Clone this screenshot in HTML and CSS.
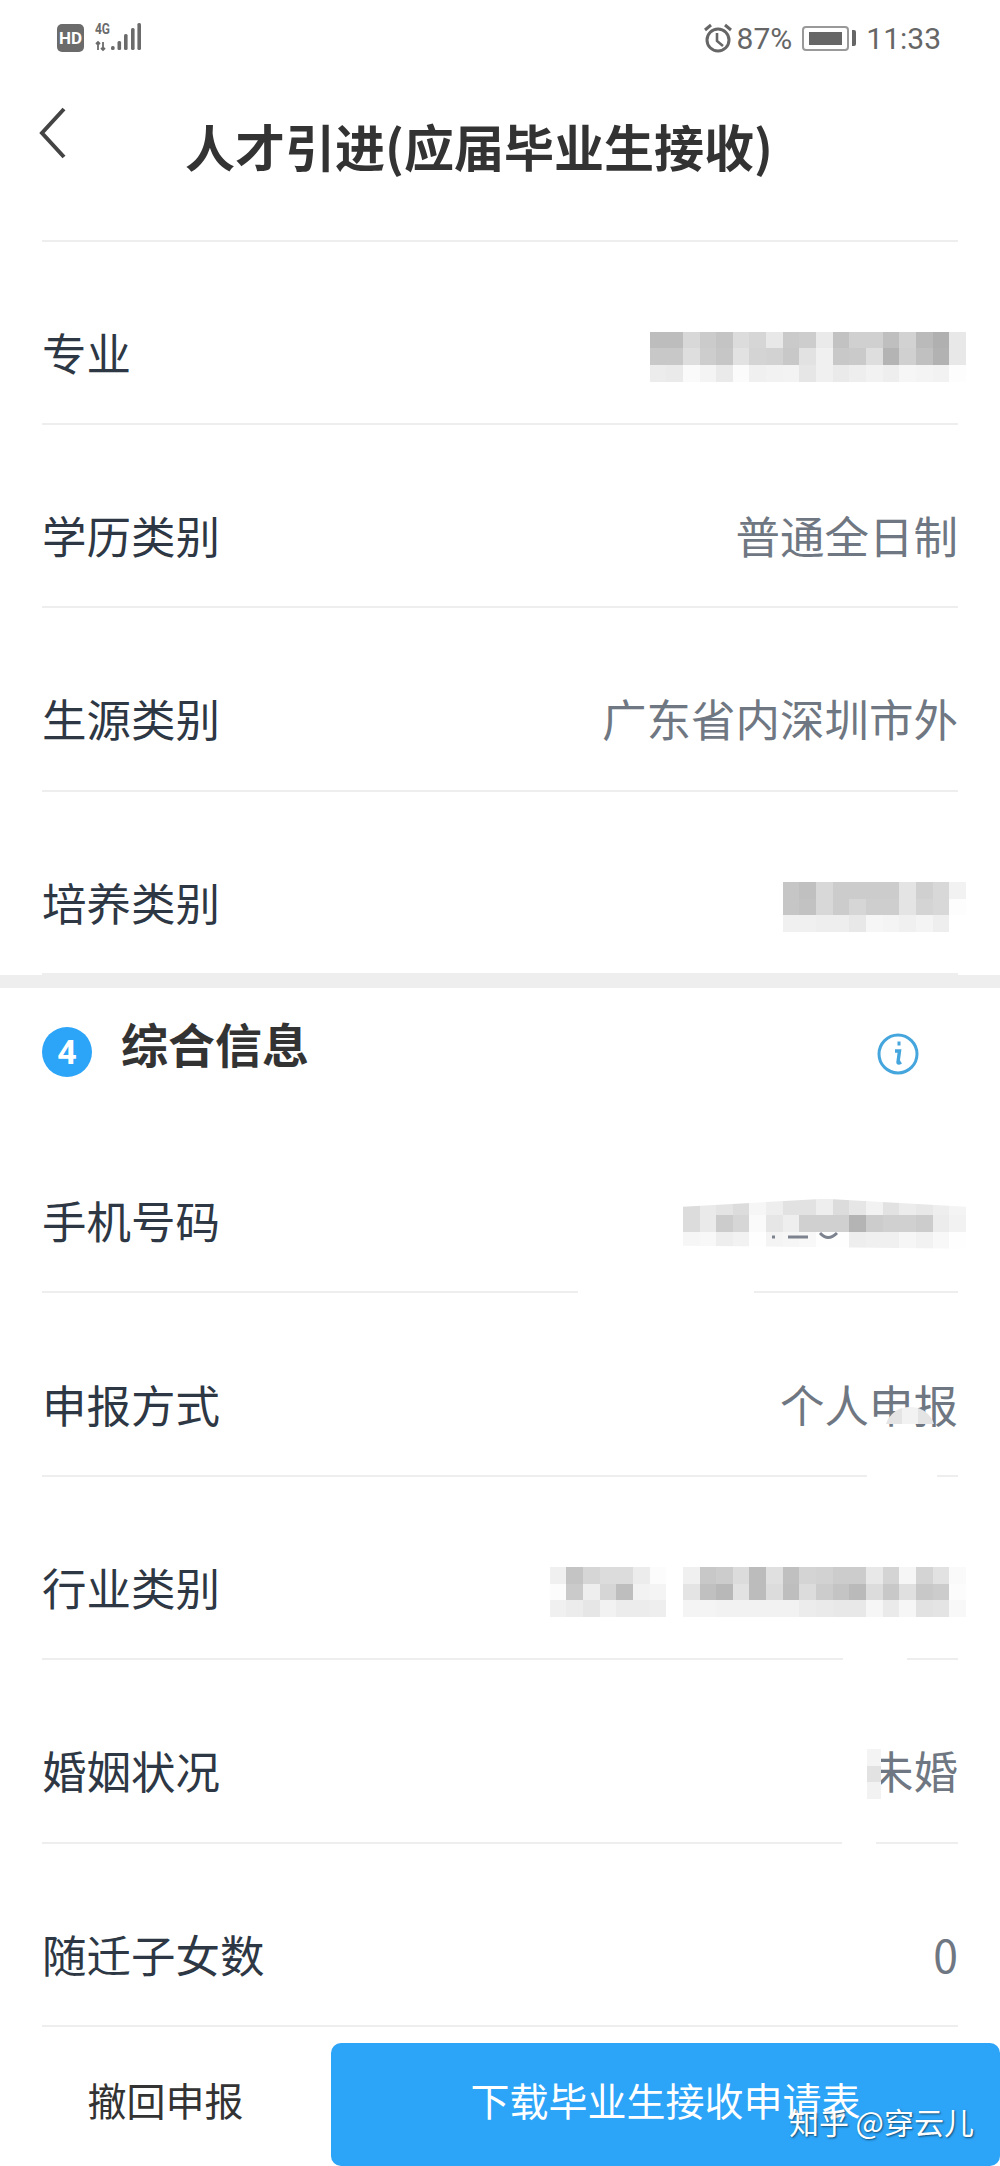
FILE: index.html
```html
<!DOCTYPE html>
<html lang="zh-CN">
<head>
    <meta charset="UTF-8">
    <meta name="viewport" content="width=device-width, initial-scale=1.0">
    <title>人才引进(应届毕业生接收)</title>
    <link rel="stylesheet" href="styles.css">
</head>
<body>
    <div class="page">
        <div class="status-bar">
            <div class="status-left">
                <span class="hd-badge">HD</span>
                <svg class="signal" width="48" height="30" viewBox="0 0 48 30">
                    <text x="0" y="11" class="signal-text" textLength="15" lengthAdjust="spacingAndGlyphs">4G</text>
                    <path d="M3 27v-8M1 21l2-2 2 2M8 19v8M6 25l2 2 2-2" fill="none" stroke="#6b6b6b" stroke-width="1.8"/>
                    <g fill="#6b6b6b">
                        <rect x="16" y="23" width="3.6" height="4" rx="1.5"/>
                        <rect x="22.5" y="18" width="3.6" height="9" rx="1.5"/>
                        <rect x="29" y="11" width="3.6" height="16" rx="1.5"/>
                        <rect x="36" y="5" width="3.6" height="22" rx="1.5"/>
                        <rect x="42.4" y="0" width="3.6" height="27" rx="1.5"/>
                    </g>
                </svg>
            </div>
            <div class="status-right">
                <svg class="alarm" width="30" height="30" viewBox="0 0 30 30" fill="none" stroke="#666">
                    <circle cx="15" cy="17" r="11" stroke-width="3"/>
                    <path d="M14 10v8l6 5" stroke-width="2.6"/>
                    <path d="M2 7l6-5M28 7l-6-5" stroke-width="3"/>
                </svg>
                <span class="status-pct">87%</span>
                <div class="battery"><div class="battery-fill"></div></div>
                <div class="battery-tip"></div>
                <span class="status-time">11:33</span>
            </div>
        </div>

        <header class="top-bar">
            <svg class="back" width="28" height="52" viewBox="0 0 28 52" fill="none" stroke="#444" stroke-width="4">
                <path d="M25 2L3 26l22 24"/>
            </svg>
            <h1>人才引进(应届毕业生接收)</h1>
        </header>

        <section class="list">
            <div class="row"><span class="label">专业</span><div class="mosaic" data-rows="bd bd d8 cb c4 dc d6 e8 ca cd ea c2 d0 d0 bf d2 ba b0 e8|c8 c8 de cd c6 e2 d4 d2 c8 e2 f0 c8 ca de b4 d0 c0 b2 e8|ec ea fa f4 ea fb f0 f2 f3 e6 f0 ea ee f2 ee f6 f4 f2 fd"></div></div>
            <div class="row"><span class="label">学历类别</span><span class="value">普通全日制</span></div>
            <div class="row"><span class="label">生源类别</span><span class="value">广东省内深圳市外</span></div>
            <div class="row"><span class="label">培养类别</span><div class="mosaic" data-rows="c6 c0 d8 cc cc cc cc e4 d0 d8 f2|c6 c2 d8 cc d6 ce ce e4 d4 d8 fd|f0 f0 ee ee e8 f6 f4 f0 f4 ee ff"></div></div>
        </section>

        <div class="band"></div>

        <div class="section-head">
            <span class="step">4</span>
            <h2>综合信息</h2>
            <svg class="info" width="42" height="42" viewBox="0 0 42 42" fill="none" stroke="#45a5dd">
                <circle cx="21" cy="21" r="19" stroke-width="3"/>
                <path d="M18 18h4.5l-1.5 11q0 2 3 0" stroke-width="3.4"/>
                <path d="M20.5 10.5h3" stroke-width="4"/>
            </svg>
        </div>

        <section class="list">
            <div class="row"><span class="label">手机号码</span>
                <div class="mosaic mosaic-phone" data-rows="dc ea e4 dc f6 ee e2 e2 ee dc e6 f2 e2 ec e8 ee f4|dc ea cc d6 fa e6 ee d0 d0 d0 b4 cc d0 d0 cc ec f2|f6 f8 ee f2 fe f4 f6 f8 fe fe ee f0 f0 f6 f2 f8 fe">
                    <svg class="phone-scrap" width="90" height="12" viewBox="0 0 90 12" fill="none" stroke="#7c838e" stroke-width="3">
                        <path d="M4 6h3M20 6h20M52 2q8 9 17 0"/>
                    </svg>
                </div>
            </div>
            <div class="row"><span class="label">申报方式</span><span class="value">个人申报</span></div>
            <div class="row"><span class="label">行业类别</span><div class="mosaic" data-rows="f0 c4 d6 dc dc ec fc ff f0 c8 cc dc bc e0 c0 d4 d2 cc cc e8 d4 f6 d4 e2 fa|fc ca ee d6 be f2 f4 ff e4 c0 b8 e2 bc dc be dc cc c4 ba dc c8 e0 c8 cc fc|f0 ec e6 f2 ec ec ee ff f4 f4 f2 f2 f2 f2 f2 ec ea e8 e8 f6 ea f6 e2 e4 f8"></div></div>
            <div class="row"><span class="label">婚姻状况</span><span class="value">未婚</span></div>
            <div class="row"><span class="label">随迁子女数</span><span class="value">0</span></div>
        </section>

        <div class="bottom-bar">
            <div class="btn-cancel">撤回申报</div>
            <div class="btn-download">下载毕业生接收申请表</div>
        </div>

        <!-- 打码痕迹 -->
        <div class="patch patch-phone"></div>
        <div class="patch patch-apply"></div>
        <div class="mosaic patch-cap" data-rows="e4 f2 e4"></div>
        <div class="patch patch-line3"></div>
        <div class="patch patch-line4"></div>
        <div class="mosaic patch-marry" data-rows="f4|e2|f2"></div>

        <div class="watermark">知乎 @穿云儿</div>
    </div>

    <script src="script.js"></script>
</body>
</html>
```

FILE: styles.css
```css
* { margin: 0; padding: 0; box-sizing: border-box; }

body {
    font-family: "Noto Sans CJK SC", "Noto Sans", sans-serif;
    background: #fff;
    color: #2e3744;
}

.page {
    position: relative;
    width: 1000px;
    height: 2166px;
    overflow: hidden;
}

.status-bar {
    height: 76px;
    padding: 0 59px 0 57px;
    display: flex;
    justify-content: space-between;
    align-items: center;
    font-family: Roboto, sans-serif;
    color: #666;
}

.status-left { display: flex; align-items: center; gap: 11px; }

.hd-badge {
    width: 27px;
    height: 28px;
    background: #6b6b6b;
    border-radius: 5px;
    color: #fff;
    font-size: 17px;
    font-weight: 700;
    line-height: 28px;
    text-align: center;
}

.signal { overflow: visible; }

.signal-text {
    font-family: Roboto, sans-serif;
    font-size: 14px;
    font-weight: 700;
    fill: #6b6b6b;
}

.status-right { display: flex; align-items: center; }

.status-pct { font-size: 30px; margin-left: 4px; }

.battery {
    width: 47px;
    height: 25px;
    margin-left: 10px;
    padding: 4px 5px;
    border: 2px solid #999;
    border-radius: 4px;
}

.battery-fill { height: 100%; background: #666; }

.battery-tip {
    width: 4px;
    height: 16px;
    margin-left: 3px;
    background: #666;
    border-radius: 0 2px 2px 0;
}

.status-time { font-size: 30px; margin-left: 10px; }

.top-bar {
    height: 165.5px;
    margin: 0 42px;
    display: flex;
    align-items: flex-start;
    border-bottom: 2px solid #eee;
}

.back { margin: 31px 0 0 -3px; }

h1 {
    margin: 31px 0 0 118px;
    font-size: 50px;
    font-weight: 700;
    line-height: 76px;
    color: #333;
    white-space: nowrap;
}

.list { padding: 0 42px; }

.row {
    height: 183.4px;
    padding-top: 38px;
    display: flex;
    justify-content: space-between;
    align-items: center;
    border-bottom: 2px solid #eee;
}

.label { font-size: 44.5px; color: #2e3744; }

.value { font-size: 44.5px; color: #6f7782; }

.mosaic { position: relative; margin: 11px -8px 0 0; }

.mosaic-row { display: flex; }

.mosaic-cell { width: 16.67px; height: 16.67px; }

.mosaic-phone {
    margin-top: 8px;
    clip-path: polygon(0 8px, 50% 0, 100% 8px, 100% 100%, 0 94%);
}

.phone-scrap { position: absolute; left: 85px; bottom: 6px; }

.band { height: 13px; background: #eee; }

.section-head {
    height: 122px;
    padding: 0 42px;
    position: relative;
    display: flex;
    align-items: flex-start;
}

.step {
    width: 50px;
    height: 50px;
    margin-top: 39px;
    background: #2ca4f7;
    border-radius: 50%;
    color: #fff;
    font-family: Roboto, sans-serif;
    font-size: 34px;
    font-weight: 700;
    line-height: 50px;
    text-align: center;
}

h2 {
    margin: 21px 0 0 29px;
    font-size: 47px;
    font-weight: 700;
    line-height: 68px;
    color: #333;
}

.info { margin: 45px 0 0 568px; }

.bottom-bar {
    height: 139px;
    padding-top: 16px;
    display: flex;
}

.btn-cancel {
    width: 331px;
    font-size: 39px;
    line-height: 113px;
    text-align: center;
    color: #333;
}

.btn-download {
    flex: 1;
    background: #2ca4f7;
    border-radius: 10px;
    font-size: 39px;
    line-height: 113px;
    text-align: center;
    color: #fff;
}

.patch { position: absolute; background: #fff; }

.patch-phone { left: 578px; top: 1284px; width: 176px; height: 18px; }

.patch-apply { left: 867px; top: 1433px; width: 70px; height: 60px; }

.patch-line3 { left: 843px; top: 1650px; width: 64px; height: 20px; }

.patch-line4 { left: 842px; top: 1832px; width: 34px; height: 20px; }

.patch-cap {
    position: absolute;
    left: 885px;
    top: 1407px;
    margin: 0;
    height: 26px;
    overflow: hidden;
    border-radius: 24px 24px 0 0;
}

.patch-marry {
    position: absolute;
    left: 867px;
    top: 1749px;
    margin: 0;
    width: 14px;
    overflow: hidden;
}

.watermark {
    position: absolute;
    right: 26px;
    top: 2100px;
    font-size: 30px;
    line-height: 42px;
    color: #fff;
    text-shadow: 1px 1px 2px rgba(0, 0, 0, .55);
    white-space: nowrap;
}
```

FILE: script.js
```js
// 马赛克：data-rows 里每格一个灰度值
document.querySelectorAll('.mosaic').forEach(box => {
    const first = box.firstChild;
    box.dataset.rows.split('|').forEach(line => {
        const row = document.createElement('div');
        row.className = 'mosaic-row';
        line.split(' ').forEach(g => {
            const cell = document.createElement('div');
            cell.className = 'mosaic-cell';
            cell.style.background = '#' + g + g + g;
            row.appendChild(cell);
        });
        box.insertBefore(row, first);
    });
});
```
